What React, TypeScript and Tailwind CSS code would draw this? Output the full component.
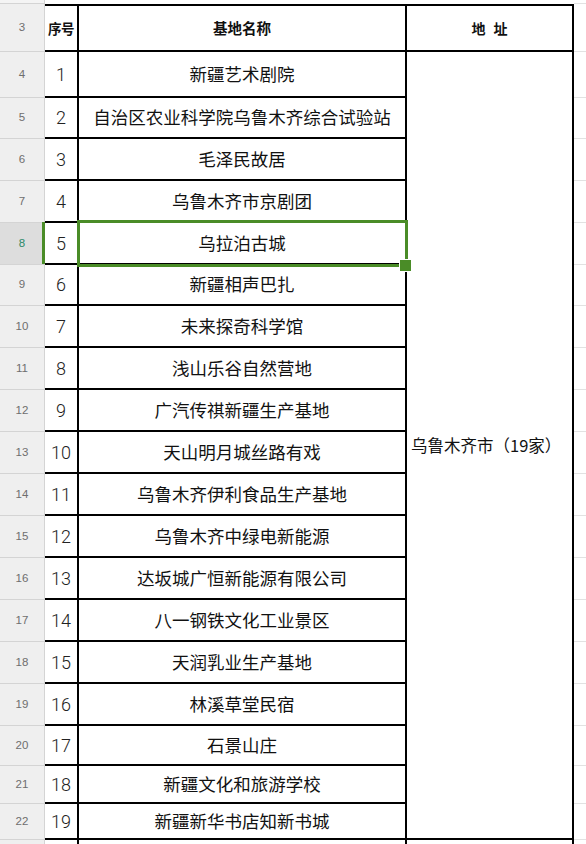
import React from "react";

const names = [
  "新疆艺术剧院",
  "自治区农业科学院乌鲁木齐综合试验站",
  "毛泽民故居",
  "乌鲁木齐市京剧团",
  "乌拉泊古城",
  "新疆相声巴扎",
  "未来探奇科学馆",
  "浅山乐谷自然营地",
  "广汽传祺新疆生产基地",
  "天山明月城丝路有戏",
  "乌鲁木齐伊利食品生产基地",
  "乌鲁木齐中绿电新能源",
  "达坂城广恒新能源有限公司",
  "八一钢铁文化工业景区",
  "天润乳业生产基地",
  "林溪草堂民宿",
  "石景山庄",
  "新疆文化和旅游学校",
  "新疆新华书店知新书城",
];

const cjk = "font-['Noto_Sans_CJK_SC',sans-serif]";
const num = "font-['Roboto','Liberation_Sans',sans-serif] font-light";

function RowHead({ label, selected }: { label?: string; selected?: boolean }) {
  return (
    <div
      className={`relative flex items-center justify-center border-r border-b border-[#d4d4d4] font-['Liberation_Sans',sans-serif] text-[11.5px] ${
        selected ? "bg-[#dddddd] text-[#2c8a68]" : "bg-[#efefef] text-[#6e6e6e]"
      }`}
    >
      {label}
      {selected && <div className="absolute right-[-1px] top-[-1px] bottom-0 w-[3px] bg-[#4a8c27]" />}
    </div>
  );
}

function Side() {
  return <div className="border-b border-[#e2e2e2] bg-white" />;
}

export default function App() {
  return (
    <div className="relative w-[586px] h-[844px] overflow-hidden bg-white">
      <div className="grid grid-cols-[45px_34px_328px_167px_1fr] grid-rows-[4px_48px_46px_41px_42px_42px_42px_41px_42px_42px_42px_42px_42px_42px_42px_42px_42px_42px_40px_38px_36px_20px]">
        {/* tail of row 2 */}
        <div className="bg-[#f4f4f4] border-r border-b border-[#d4d4d4]" />
        <div className="col-span-3" />
        <div className="border-b border-[#e2e2e2]" />

        {/* header row */}
        <RowHead label="3" />
        <div className={`flex items-center justify-center border-t-2 border-r-2 border-b-2 border-black ${cjk} font-bold text-[13.5px] text-[#111] tracking-[-0.5px]`}>
          序号
        </div>
        <div className={`flex items-center justify-center border-t-2 border-r-2 border-b-2 border-black ${cjk} font-bold text-[14.5px] text-[#111]`}>
          基地名称
        </div>
        <div className={`flex items-center justify-center border-t-2 border-r-2 border-b-2 border-black ${cjk} font-bold text-[14px] text-[#111]`}>
          <span>地</span>
          <span className="ml-[8px]">址</span>
        </div>
        <Side />

        {names.map((n, i) => (
          <React.Fragment key={n}>
            <RowHead label={String(i + 4)} selected={i === 4} />
            <div className={`flex items-center justify-center border-r-2 border-b-2 border-black ${num} text-[18px] text-[#222]`}>
              {i + 1}
            </div>
            <div className={`flex items-center justify-center border-r-2 border-b-2 border-black ${cjk} text-[17.5px] text-[#111] whitespace-nowrap`}>
              {n}
            </div>
            {i === 0 && (
              <div className={`row-span-19 flex items-center pl-[4px] border-r-2 border-b-2 border-black ${cjk} text-[16.5px] text-[#111] whitespace-nowrap`}>
                乌鲁木齐市（19家）
              </div>
            )}
            <Side />
          </React.Fragment>
        ))}

        {/* row 23, cut off */}
        <RowHead />
        <div className="border-r-2 border-black" />
        <div className="border-r-2 border-black" />
        <div className="border-r-2 border-black" />
        <div />
      </div>

      {/* active cell selection */}
      <div className="absolute left-[77px] top-[220px] w-[331px] h-[47px] border-[3px] border-[#4a8c27]" />
      <div className="absolute left-[399px] top-[259px] w-[13px] h-[13px] bg-[#4a8c27] border-[1.5px] border-white" />
    </div>
  );
}
